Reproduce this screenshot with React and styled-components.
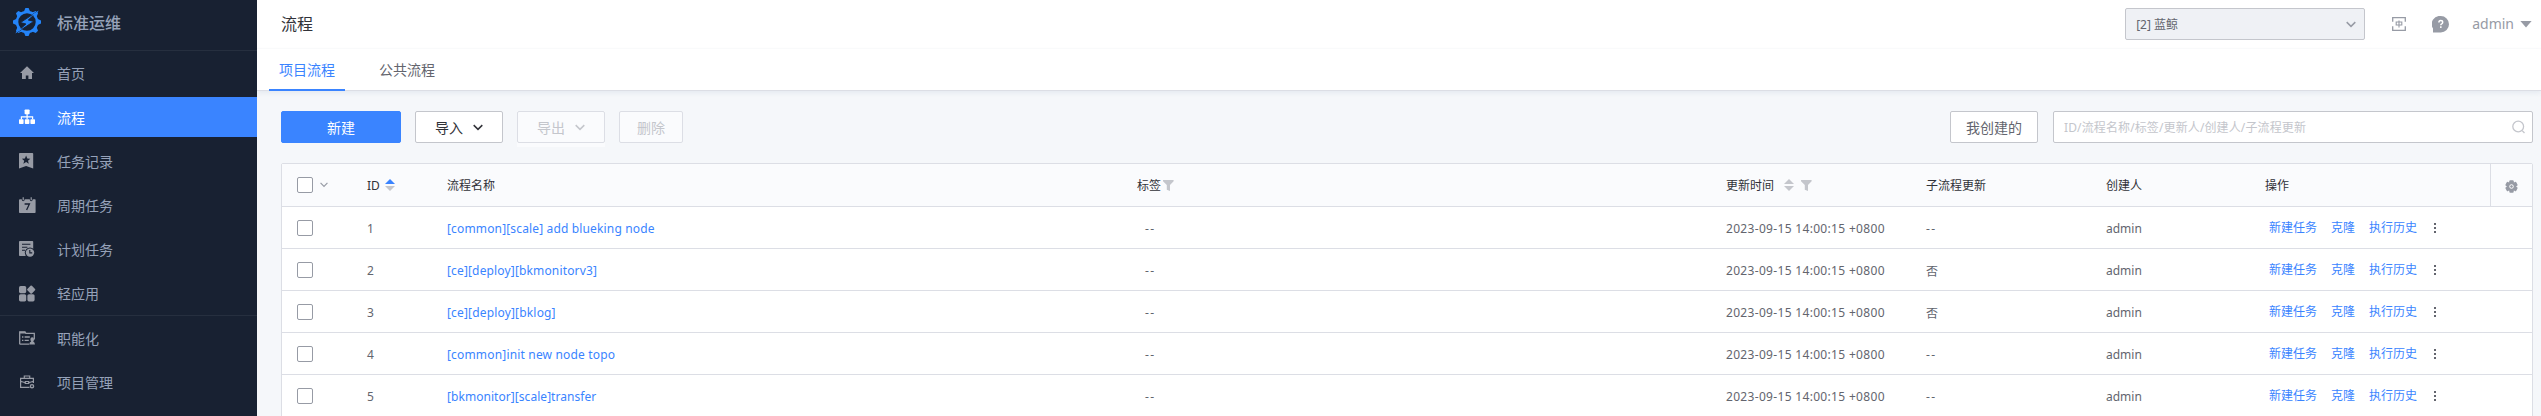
import React from "react";
import styled, { createGlobalStyle, css } from "styled-components";

const GlobalStyle = createGlobalStyle`
  * { box-sizing: border-box; }
  body {
    margin: 0;
    overflow: hidden;
    font-family: "Noto Sans", "Noto Sans CJK SC", sans-serif;
    font-size: 12px;
    color: #63656e;
    background: #f5f7fa;
  }
`;

const Page = styled.div`
  display: flex;
  width: 100%;
  height: 416px;
  overflow: hidden;
`;

/* ---------- sidebar ---------- */

const Sidebar = styled.nav`
  display: flex;
  flex-direction: column;
  flex: none;
  width: 257px;
  background: #182132;
`;

const Brand = styled.div`
  display: flex;
  align-items: center;
  gap: 16px;
  height: 51px;
  padding: 0 0 4px 13px;
  border-bottom: 1px solid #262f3f;
  color: #96a2b9;
  font-size: 16px;
  font-weight: 500;
  line-height: 24px;

  svg { margin-top: -3px; }
`;

const NavItem = styled.a`
  display: flex;
  align-items: center;
  gap: 22px;
  flex: none;
  height: 40px;
  margin: 2px 0;
  padding-left: 19px;
  font-size: 14px;
  color: ${(p) => (p.$active ? "#fff" : "#96a2b9")};
  background: ${(p) => (p.$active ? "#3a84ff" : "transparent")};

  svg { flex: none; color: ${(p) => (p.$active ? "#fff" : "#979ba5")}; }
`;

const NavDivider = styled.div`
  flex: none;
  height: 1px;
  background: #262f3f;
`;

/* ---------- header ---------- */

const Main = styled.main`
  display: flex;
  flex-direction: column;
  flex: 1;
  min-width: 0;
  background: #f5f7fa;
`;

const TopBar = styled.header`
  display: flex;
  align-items: center;
  flex: none;
  height: 49px;
  padding: 0 9px 0 24px;
  background: #fff;
  border-bottom: 1px solid #fcfcfd;
`;

const Title = styled.h1`
  flex: 1;
  margin: 0;
  font-size: 16px;
  font-weight: 400;
  line-height: 24px;
  color: #313238;
`;

const ProjectSelect = styled.div`
  display: flex;
  align-items: center;
  justify-content: space-between;
  width: 240px;
  height: 32px;
  padding: 0 8px 0 10px;
  margin-right: 27px;
  border: 1px solid #c4c6cc;
  border-radius: 2px;
  background: #eff1f5;
  color: #63656e;

  svg { color: #979ba5; }
`;

const HelpIcon = styled.span`
  display: flex;
  margin: 0 23px 0 26px;
`;

const User = styled.div`
  display: flex;
  align-items: center;
  gap: 6px;
  padding-bottom: 1px;
  font-size: 14px;
  color: #979ba5;
`;

const Tabs = styled.div`
  display: flex;
  flex: none;
  height: 42px;
  padding-left: 12px;
  gap: 24px;
  background: #fff;
  box-shadow: inset 0 -1px 0 #dcdee5, 0 2px 5px rgba(40, 80, 130, 0.08);
`;

const Tab = styled.div`
  display: flex;
  align-items: center;
  height: 42px;
  padding: 0 10px;
  font-size: 14px;
  border-bottom: 2px solid ${(p) => (p.$active ? "#3a84ff" : "transparent")};
  color: ${(p) => (p.$active ? "#3a84ff" : "#63656e")};
`;

/* ---------- toolbar ---------- */

const Toolbar = styled.div`
  display: flex;
  flex: none;
  gap: 14px;
  height: 32px;
  margin: 20px 8px 20px 24px;
`;

const disabledLook = css`
  color: #c4c6cc;
  background: #fafbfd;
  border-color: #dcdee5;
`;

const primaryLook = css`
  color: #fff;
  background: #3a84ff;
  border-color: #3a84ff;
`;

const Button = styled.div`
  display: flex;
  align-items: center;
  justify-content: center;
  gap: 10px;
  width: ${(p) => p.$width}px;
  height: 32px;
  padding-bottom: 1px;
  border: 1px solid #c4c6cc;
  border-radius: 2px;
  background: #fff;
  color: #63656e;
  font-size: 14px;
  ${(p) => p.$dark && "color: #313238;"}
  ${(p) => p.$primary && primaryLook}
  ${(p) => p.$disabled && disabledLook}

  svg { margin-top: 2px; }
`;

const DisabledDrop = styled.div`
  height: 36px;
  background: #fafbfd;
`;

const Filters = styled.div`
  display: flex;
  gap: 15px;
  margin-left: auto;
`;

const SearchBox = styled.div`
  display: flex;
  align-items: center;
  justify-content: space-between;
  width: 480px;
  height: 32px;
  padding: 0 7px 0 10px;
  border: 1px solid #c4c6cc;
  border-radius: 2px;
  background: #fff;
  color: #c4c6cc;
  letter-spacing: 0.12px;
`;

/* ---------- table ---------- */

const Table = styled.div`
  flex: none;
  margin: 0 8px 0 24px;
  border: 1px solid #dcdee5;
  border-radius: 2px 2px 0 0;
  background: #fff;
`;

const Cell = styled.div`
  display: flex;
  align-items: center;
  min-width: 0;
  padding-left: ${(p) => p.$indent ?? 15}px;
  white-space: nowrap;
`;

const Row = styled.div`
  display: grid;
  grid-template-columns: 70px 80px 1fr 589px 200px 180px 159px 240px 42px;
  height: ${(p) => (p.$head ? 43 : 42)}px;
  border-bottom: 1px solid #dcdee5;
  background: ${(p) => (p.$head ? "#fafbfd" : "#fff")};
  color: ${(p) => (p.$head ? "#313238" : "#63656e")};

  ${Cell} { padding-top: ${(p) => (p.$head ? 0 : 1)}px; }
`;

const Checkbox = styled.span`
  width: 16px;
  height: 16px;
  margin-right: 7px;
  border: 1px solid #979ba5;
  border-radius: 2px;
  background: #fff;
`;

const CheckMenu = styled.span`
  display: flex;
  color: #979ba5;
`;

const Text = styled.span`
  padding-top: 1px;
  letter-spacing: ${(p) => p.$track ?? 0}px;
`;

const NameLink = styled(Text)`
  color: #3a84ff;
`;

const HeadIcon = styled.span`
  display: flex;
  margin-left: ${(p) => p.$gap}px;
`;

const Actions = styled.div`
  display: flex;
  align-items: center;
  gap: 14px;
  padding: 0 0 2px 19px;
  color: #3a84ff;

  svg { margin: 3px 0 0 3px; color: #63656e; }
`;

const Settings = styled.div`
  display: flex;
  align-items: center;
  justify-content: center;
  padding-top: 3px;
  border-left: 1px solid #dcdee5;
  color: #979ba5;
`;

/* ---------- icons ---------- */

const Logo = () => (
  <svg width="28" height="28" viewBox="0 0 28 28" fill="none">
    <g fill="#2484f8">
      {[0, 45, 90, 135, 180, 225, 270, 315].map((a) => (
        <path key={a} d="M10.600 4.200 12.400 0h3.200L17.400 4.200Z" transform={`rotate(${a} 14 14)`} />
      ))}
    </g>
    <circle cx="14" cy="14" r="10" stroke="#2484f8" strokeWidth="2.600" />
    <path d="M25.600 2.600 7.400 14.600 12.900 16 2.400 25.600 20.800 13.400 15.300 12Z" fill="#2484f8" stroke="#182132" strokeWidth="0.900" />
    <path d="M25.600 2.400 19 6.700l3.500 2ZM2.400 25.600l6.600-4.300-3.500-2Z" fill="#2484f8" />
  </svg>
);

const HomeIcon = () => (
  <svg width="16" height="16" viewBox="0 0 16 16" fill="currentColor">
    <path d="M8 1.200 1 8h2v6h3.800v-3.400h2.600V14H13V8h2Z" />
  </svg>
);

const FlowIcon = () => (
  <svg width="16" height="16" viewBox="0 0 16 16" fill="currentColor">
    <rect x="5.600" y="0.400" width="5" height="4.800" rx="0.800" />
    <rect x="0" y="10.200" width="4.600" height="4.800" rx="0.800" />
    <rect x="5.800" y="10.200" width="4.600" height="4.800" rx="0.800" />
    <rect x="11.400" y="10.200" width="4.600" height="4.800" rx="0.800" />
    <path d="M7.500 5h1.200v2.300h5.500v3H13V8.500H8.700v1.800H7.500V8.500H3v1.800H1.800v-3h5.700Z" />
  </svg>
);

const RecordIcon = () => (
  <svg width="16" height="16" viewBox="0 0 16 16" fill="currentColor" fillRule="evenodd">
    <path d="M.8 0h12.600q.8 0 .8.800V15.600L7.100 13 0 15.600V.8Q0 0 .8 0ZM7.100 2.600 5.900 5.500l-3 .2 2.300 2-.8 3L7.100 9l2.700 1.700-.8-3 2.300-2-3-.2Z" />
  </svg>
);

const CalendarIcon = () => (
  <svg width="17" height="16" viewBox="0 0 17 16">
    <path
      d="M1 2.200h1.800v.6a1.400 1.400 0 0 0 2.800 0v-.6h5.200v.6a1.400 1.400 0 0 0 2.800 0v-.6H16q.6 0 .6.800v12.200q0 .8-.8.8H.8q-.8 0-.8-.8V3q0-.8 1-.8Z"
      fill="currentColor"
    />
    <path d="M4.200.300v2.900M12.200.300v2.900" stroke="currentColor" strokeWidth="1.200" />
    <path d="M5.600 7h4.800L7.600 13" fill="none" stroke="#182132" strokeWidth="1.300" />
  </svg>
);

const PlanIcon = () => (
  <svg width="16" height="16" viewBox="0 0 16 16">
    <path d="M.8 0h12.600q.8 0 .8.800V15H.8q-.8 0-.8-.8V.8Q0 0 .8 0Z" fill="currentColor" />
    <path d="M3 3.300h8.400M3 6.300h5.400M3 9.300h3" stroke="#182132" strokeWidth="1.100" />
    <circle cx="11" cy="11.600" r="5.200" fill="#182132" />
    <circle cx="11" cy="11.600" r="4.200" fill="currentColor" />
    <path d="M10.800 9v2.900h2.400" stroke="#182132" strokeWidth="1.100" fill="none" />
  </svg>
);

const AppsIcon = () => (
  <svg width="17" height="17" viewBox="0 0 17 17" fill="currentColor">
    <rect x="0" y="1" width="7.200" height="7.200" rx="1.600" />
    <rect x="0" y="9.200" width="7.200" height="7.200" rx="1.600" />
    <rect x="8.400" y="9.200" width="7.200" height="7.200" rx="1.600" />
    <rect x="9" y="1.400" width="6.400" height="6.400" rx="1" transform="rotate(45 12.200 4.600)" />
  </svg>
);

const FunctionIcon = () => (
  <svg width="16" height="14" viewBox="0 0 16 14" fill="none" stroke="currentColor">
    <path d="M.7 13.200V.8h5.200l1 1.600h8.400v6M.7 13.200h9.400" strokeWidth="1.300" />
    <path d="M.7 1.600h5.800" strokeWidth="1.800" />
    <path d="M3 6h1.400M5.600 6h5.200M3 9.400h1.400M5.600 9.400h4.200" strokeWidth="1.300" />
    <path d="M10.200 13.600q.2-2.600 2-3.200-.8-1-.8-2.200 0-1.900 1.800-1.900T15 8.200q0 1.200-.8 2.200 1.600.6 1.800 3.200Z" fill="currentColor" stroke="none" />
  </svg>
);

const ProjectIcon = () => (
  <svg width="16" height="14" viewBox="0 0 16 14" fill="none" stroke="currentColor" strokeWidth="1.200">
    <path d="M10.500 12.400H1.600V3.400H14.400V8M5.300 3.200V1H10.700V3.200M1.600 6.300 6.300 7.800M14.400 6.300 9.700 7.800" />
    <path d="M6.300 6.500h3.400v2H6.300Z" />
    <circle cx="13" cy="11.200" r="1.600" strokeWidth="1.400" />
  </svg>
);

const Chevron = ({ width = 10, stroke = 1.5 }) => (
  <svg width={width} height={width * 0.7} viewBox="0 0 10 7" fill="none">
    <path d="m.7 1.100 4.300 4.300 4.300-4.300" stroke="currentColor" strokeWidth={stroke} />
  </svg>
);

const LangIcon = () => (
  <svg width="14" height="14" viewBox="0 0 14 14" fill="none" stroke="#979ba5" strokeWidth="1.300">
    <path d="M.7 4.800V.7h12.600v4.100M.7 9.200v4.100h12.600V9.200" />
    <path d="M4.200 5h5.600v3H4.200ZM7 3.600v6.800" strokeWidth="1.100" />
  </svg>
);

const QuestionIcon = () => (
  <svg width="17" height="17" viewBox="0 0 17 17">
    <path d="M8.800 0a8.200 8.200 0 1 1 0 16.400H1V12.600A8.200 8.200 0 0 1 8.800 0Z" fill="#979ba5" />
    <path d="M6.900 6.400q0-1.900 1.900-1.900t1.900 1.700q0 1-1 1.600-.9.500-.9 1.400" fill="none" stroke="#fff" strokeWidth="1.500" />
    <rect x="8" y="10.300" width="1.600" height="1.600" fill="#fff" />
  </svg>
);

const CaretDown = () => (
  <svg width="12" height="8" viewBox="0 0 12 8" fill="#979ba5">
    <path d="M.4 1h11.200L6 7.400Z" />
  </svg>
);

const SearchIcon = () => (
  <svg width="13" height="14" viewBox="0 0 13 14" fill="none" stroke="#c4c6cc" strokeWidth="1.300">
    <circle cx="6.200" cy="6.500" r="5.400" />
    <path d="m10.200 10.600 2.300 2.400" />
  </svg>
);

const SortIcon = ({ asc }) => (
  <svg width="10" height="12" viewBox="0 0 10 12">
    <path d="M0 5 5 0l5 5Z" fill={asc ? "#3a84ff" : "#c4c6cc"} />
    <path d="M0 7h10l-5 5Z" fill="#c4c6cc" />
  </svg>
);

const FunnelIcon = () => (
  <svg width="11" height="11" viewBox="0 0 11 11" fill="#c4c6cc">
    <path d="M0 0h10.600v1.200L7 5v6L3.800 9.800V5L0 1.200Z" />
  </svg>
);

const GearIcon = () => (
  <svg width="13" height="13" viewBox="0 0 13 13">
    {[0, 60, 120].map((a) => (
      <rect key={a} x="4.300" y="0.300" width="4.400" height="12.400" rx="1" fill="currentColor" transform={`rotate(${a} 6.500 6.500)`} />
    ))}
    <circle cx="6.500" cy="6.500" r="4.700" fill="currentColor" />
    <circle cx="6.500" cy="6.500" r="1.800" fill="none" stroke="#fff" strokeWidth="1" />
  </svg>
);

const MoreIcon = () => (
  <svg width="2" height="12" viewBox="0 0 2 12" fill="currentColor">
    <path d="M0 1h2v2H0ZM0 5h2v2H0ZM0 9h2v2H0Z" />
  </svg>
);

/* ---------- data ---------- */

const mainNav = [
  { label: "首页", Icon: HomeIcon },
  { label: "流程", Icon: FlowIcon, active: true },
  { label: "任务记录", Icon: RecordIcon },
  { label: "周期任务", Icon: CalendarIcon },
  { label: "计划任务", Icon: PlanIcon },
  { label: "轻应用", Icon: AppsIcon },
];

const manageNav = [
  { label: "职能化", Icon: FunctionIcon },
  { label: "项目管理", Icon: ProjectIcon },
];

const IconSlot = styled.span`
  display: flex;
  align-items: center;
  justify-content: center;
  width: 16px;
`;

const flows = [
  { id: 1, name: "[common][scale] add blueking node", sub: "--", track: 0.15 },
  { id: 2, name: "[ce][deploy][bkmonitorv3]", sub: "否", track: 0.15 },
  { id: 3, name: "[ce][deploy][bklog]", sub: "否", track: 0.17 },
  { id: 4, name: "[common]init new node topo", sub: "--", track: 0.17 },
  { id: 5, name: "[bkmonitor][scale]transfer", sub: "--", track: 0.05 },
];

const NavLinks = ({ items }) =>
  items.map(({ label, Icon, active }) => (
    <NavItem key={label} $active={active}>
      <IconSlot><Icon /></IconSlot>
      {label}
    </NavItem>
  ));

export default function App() {
  return (
    <Page>
      <GlobalStyle />
      <Sidebar>
        <Brand><Logo />标准运维</Brand>
        <NavLinks items={mainNav} />
        <NavDivider />
        <NavLinks items={manageNav} />
      </Sidebar>
      <Main>
        <TopBar>
          <Title>流程</Title>
          <ProjectSelect>[2] 蓝鲸<Chevron /></ProjectSelect>
          <LangIcon />
          <HelpIcon><QuestionIcon /></HelpIcon>
          <User>admin<CaretDown /></User>
        </TopBar>
        <Tabs>
          <Tab $active>项目流程</Tab>
          <Tab>公共流程</Tab>
        </Tabs>
        <Toolbar>
          <Button $primary $width={120}>新建</Button>
          <Button $dark $width={88}>导入<Chevron /></Button>
          <DisabledDrop>
            <Button $disabled $width={88}>导出<Chevron /></Button>
          </DisabledDrop>
          <Button $disabled $width={64}>删除</Button>
          <Filters>
            <Button $width={88}>我创建的</Button>
            <SearchBox>ID/流程名称/标签/更新人/创建人/子流程更新<SearchIcon /></SearchBox>
          </Filters>
        </Toolbar>
        <Table>
          <Row $head>
            <Cell><Checkbox /><CheckMenu><Chevron width={8} /></CheckMenu></Cell>
            <Cell>ID<HeadIcon $gap={5}><SortIcon asc /></HeadIcon></Cell>
            <Cell>流程名称</Cell>
            <Cell>标签<HeadIcon $gap={2}><FunnelIcon /></HeadIcon></Cell>
            <Cell>
              更新时间
              <HeadIcon $gap={10}><SortIcon /></HeadIcon>
              <HeadIcon $gap={7}><FunnelIcon /></HeadIcon>
            </Cell>
            <Cell>子流程更新</Cell>
            <Cell>创建人</Cell>
            <Cell>操作</Cell>
            <Settings><GearIcon /></Settings>
          </Row>
          {flows.map((flow) => (
            <Row key={flow.id}>
              <Cell><Checkbox /></Cell>
              <Cell><Text>{flow.id}</Text></Cell>
              <Cell><NameLink $track={flow.track}>{flow.name}</NameLink></Cell>
              <Cell $indent={23}><Text $track={1.4}>--</Text></Cell>
              <Cell><Text $track={0.32}>2023-09-15 14:00:15 +0800</Text></Cell>
              <Cell><Text $track={flow.sub === "--" ? 1.4 : 0}>{flow.sub}</Text></Cell>
              <Cell><Text>admin</Text></Cell>
              <Actions>
                <span>新建任务</span>
                <span>克隆</span>
                <span>执行历史</span>
                <MoreIcon />
              </Actions>
            </Row>
          ))}
        </Table>
      </Main>
    </Page>
  );
}
